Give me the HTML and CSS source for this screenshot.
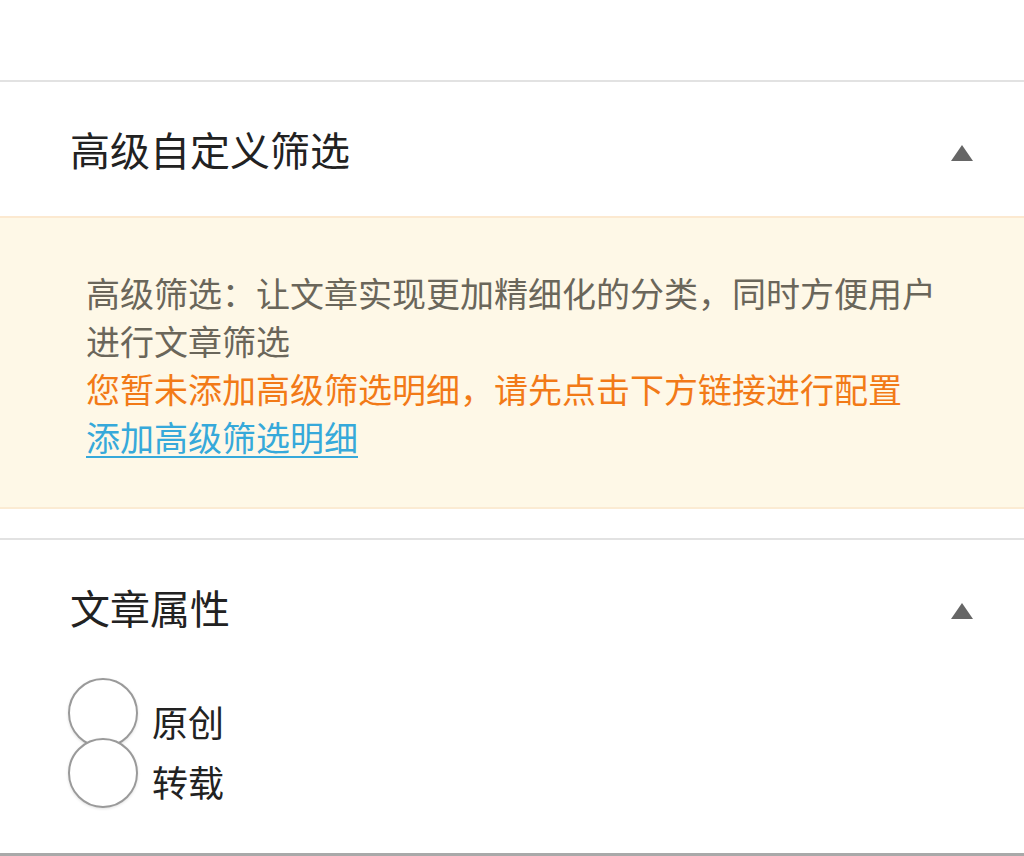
FILE: index.html
```html
<!DOCTYPE html>
<html lang="zh-CN">
<head>
<meta charset="utf-8">
<title>文章设置</title>
<link rel="stylesheet" href="styles.css">
</head>
<body>
<div class="top-space"></div>
<section class="panel">
  <div class="panel-head">
    <h2 class="panel-title">高级自定义筛选</h2>
    <span class="caret-up"></span>
  </div>
  <div class="notice">
    <p class="notice-desc">高级筛选：让文章实现更加精细化的分类，同时方便用户进行文章筛选</p>
    <p class="notice-warn">您暂未添加高级筛选明细，请先点击下方链接进行配置</p>
    <a class="notice-link" href="#">添加高级筛选明细</a>
  </div>
</section>
<div class="gap"></div>
<section class="panel panel-last">
  <div class="panel-head">
    <h2 class="panel-title">文章属性</h2>
    <span class="caret-up"></span>
  </div>
  <div class="radio-list">
    <label class="radio-item"><span class="radio-circle"></span><span class="radio-text">原创</span></label>
    <label class="radio-item"><span class="radio-circle"></span><span class="radio-text">转载</span></label>
  </div>
</section>
</body>
</html>
```

FILE: styles.css
```css
html, body {
  margin: 0;
  padding: 0;
  background: #ffffff;
}
body {
  font-family: "Noto Sans CJK SC", "Noto Sans", sans-serif;
  color: #222222;
  width: 1024px;
  height: 856px;
  overflow: hidden;
}
.top-space {
  height: 80px;
}
.panel {
  border-top: 2px solid #e2e2e2;
}
.panel-head {
  height: 134px;
  display: flex;
  align-items: center;
  justify-content: space-between;
  padding: 0 51px 0 70px;
}
.panel-title {
  margin: 0;
  font-size: 40px;
  font-weight: 400;
  line-height: 1;
  color: #222222;
  position: relative;
  top: 0;
}
.caret-up {
  width: 0;
  height: 0;
  border-left: 11px solid transparent;
  border-right: 11px solid transparent;
  border-bottom: 16px solid #666666;
  position: relative;
  top: 4px;
}
.notice {
  background: #fef8e7;
  border-top: 2px solid #fce9d0;
  border-bottom: 2px solid #fbebd3;
  padding: 51px 88px 46px 86px;
  font-size: 34px;
  line-height: 48px;
}
.notice p {
  margin: 0;
}
.notice-desc {
  color: #6a665a;
  text-align: justify;
}
.notice-warn {
  color: #f27a17;
}
.notice-link {
  color: #36a9da;
  text-decoration: underline;
  text-decoration-thickness: 2px;
  text-underline-offset: 5px;
}
.gap {
  height: 29px;
}
.panel-last {
  border-top: 2px solid #e2e2e2;
  height: 318px;
  box-sizing: border-box;
  border-bottom: 3px solid #a9a9a9;
}
.radio-list {
  display: flex;
  flex-direction: column;
  padding: 9px 0 0 68px;
}
.radio-item {
  display: flex;
  align-items: center;
  height: 60px;
}
.radio-circle {
  width: 66px;
  height: 66px;
  border: 2px solid #9a9a9a;
  border-radius: 50%;
  background: #ffffff;
  box-shadow: 0 1px 3px rgba(0,0,0,0.12);
  flex: none;
  margin: -5px 0;
}
.radio-text {
  margin-left: 14px;
  font-size: 36px;
  line-height: 1;
  color: #222222;
  position: relative;
  top: 8px;
}
```
